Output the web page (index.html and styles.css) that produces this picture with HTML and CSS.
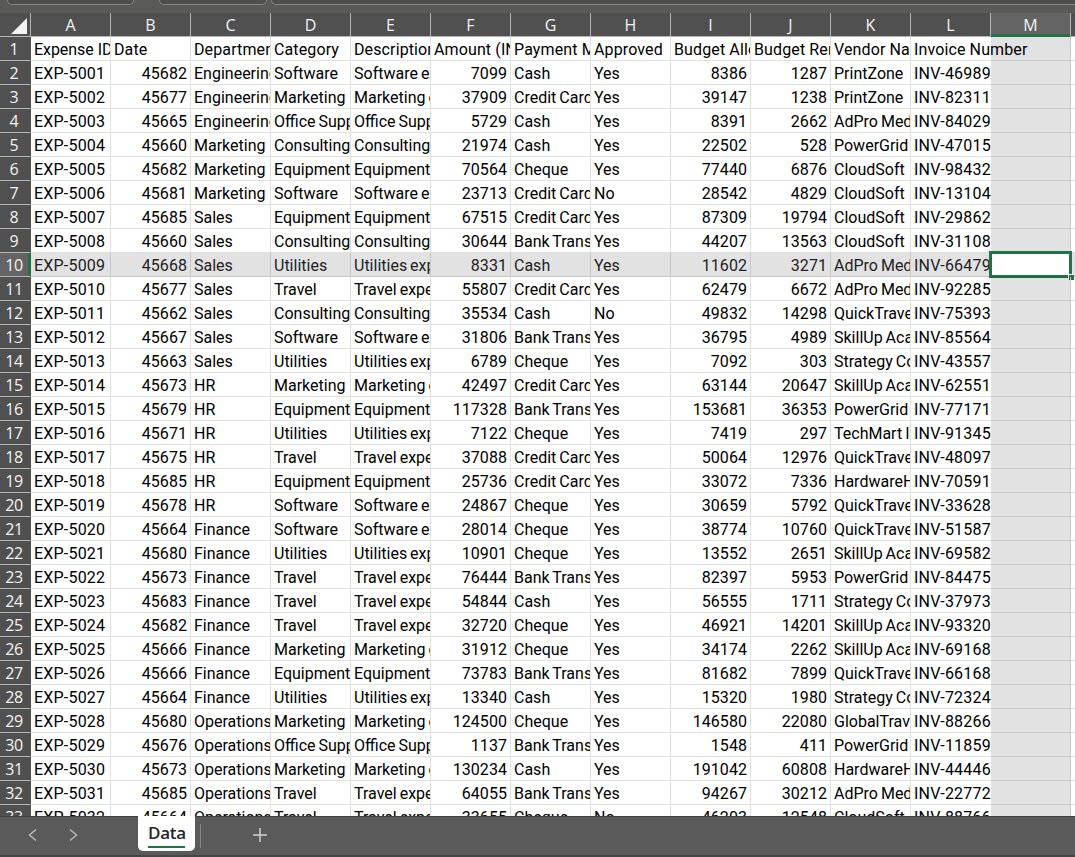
FILE: index.html
```
<!doctype html>
<html lang="en">
<head>
	<meta charset="UTF-8">
	<title>Expenses</title>
	<link rel="stylesheet" href="styles.css">
</head>
<body>
	<div class="formula-bar">
		<div class="box name-box"></div>
		<div class="box fx-box"></div>
		<div class="box formula-box"></div>
	</div>

	<div class="grid">
		<table id="sheet">
			<thead></thead>
			<tbody></tbody>
		</table>
	</div>

	<div class="tab-bar">
		<svg class="arrow" width="10" height="14" viewBox="0 0 10 14"><path d="M8 1.5L1.5 7L8 12.5"/></svg>
		<svg class="arrow" width="10" height="14" viewBox="0 0 10 14"><path d="M2 1.5L8.5 7L2 12.5"/></svg>
		<div class="tab"><span>Data</span></div>
		<div class="divider"></div>
		<svg class="plus" width="16" height="16" viewBox="0 0 16 16"><path d="M8 1V15M1 8H15"/></svg>
	</div>

	<script src="sheet.js"></script>
</body>
</html>
```

FILE: styles.css
```
body {
	margin: 0;
	width: 1075px;
	height: 857px;
	overflow: hidden;
	display: flex;
	flex-direction: column;
	background: #5a5a58;
	font-family: Roboto, "Liberation Sans", sans-serif;
	font-size: 16px;
}

/* bottom edge of the formula bar */
.formula-bar { display: flex; height: 13px; flex: none; padding-left: 7px; }
.box { box-sizing: border-box; height: 5px; background: #4e4e4e; border: 1px solid #858585; border-top: 0; border-radius: 0 0 5px 5px; }
.name-box { width: 127px; margin-right: 25px; }
.fx-box { width: 108px; margin-right: 4px; }
.formula-box { flex: 1; border-right: 0; border-bottom-right-radius: 0; }

.grid { height: 803px; flex: none; overflow: hidden; background: #fff; }
table { table-layout: fixed; width: 1151px; border-collapse: separate; border-spacing: 0; }
th, td { box-sizing: border-box; height: 24px; padding: 1px 0 0; white-space: nowrap; line-height: 22px; }

th { padding-top: 2px; line-height: 21px; background: #505050; color: #f3f3f3; font-family: "Open Sans", "Noto Sans", sans-serif; font-weight: normal; border-right: 1px solid #b5b5b5; border-bottom: 1px solid #b5b5b5; }
thead th { width: 80px; }
thead th.corner { width: 31px; }
tbody th { border-right-color: #505050; letter-spacing: -0.3px; padding-right: 2px; }
.corner svg { display: block; margin: 0 0 0 11px; fill: #f3f3f3; }
th.active { background: #646464; }
thead th.active { box-shadow: inset 0 -2px #217346; border-bottom-color: #217346; }
tbody th.active { box-shadow: inset -2px 0 #217346; border-right-color: #217346; }

td { overflow: hidden; padding: 2px 3px 0; line-height: 21px; color: #000; border-right: 1px solid #e0e0e0; border-bottom: 1px solid #e0e0e0; word-spacing: -1px; }
td.num { text-align: right; letter-spacing: 0.05px; }
td.id, td.last { letter-spacing: 0.2px; }
td.last { overflow: visible; border-right-color: transparent; }
tr:first-child td { letter-spacing: 0.12px; word-spacing: 0; }
tr:first-child td.id { letter-spacing: -0.05px; }
tr.current td { background: #e2e2e2; border-color: #c8c8c8; color: #222; }
tr.current td.last { border-right-color: #e2e2e2; }
td.selected { position: relative; background: rgba(0, 0, 0, 0.115); border-color: #c8c8c8; }

tr.current td.selected { overflow: visible; background: #fff; }
.cursor { position: absolute; left: -2px; top: -2px; box-sizing: border-box; width: 83px; height: 27px; border: 3px solid #217346; }
.handle { position: absolute; right: -5px; bottom: -5px; width: 5px; height: 5px; background: #217346; border: 1px solid #fff; border-width: 1px 0 0 1px; }

.tab-bar { display: flex; flex: 1; box-sizing: border-box; border-top: 1px solid #404040; border-bottom: 2px solid #444; background: #5a5a5a; }
.tab-bar svg { fill: none; stroke: #b8b8b8; stroke-width: 1.5; }
.arrow { margin: 11px 0 0 28px; }
.arrow + .arrow { margin-left: 30px; }
.tab { box-sizing: border-box; width: 57px; height: 35px; margin: -1px 0 0 60px; padding: 4px 10px 0; background: #fff; border-radius: 0 0 5px 5px; }
.tab span { display: block; height: 26px; border-bottom: 2px solid #107c41; color: #262626; font: 600 17px/25px "Open Sans", sans-serif; text-align: center; letter-spacing: -0.3px; }
.divider { width: 1px; height: 24px; margin: 7px 0 0 5px; background: #858585; }
.tab-bar .plus { margin: 10px 0 0 51px; stroke: #d0d0d0; }
```

FILE: sheet.js
```
var headers = ['Expense ID', 'Date', 'Department', 'Category', 'Description', 'Amount (INR)', 'Payment Mode', 'Approved', 'Budget Allocated', 'Budget Remaining', 'Vendor Name', 'Invoice Number'];

// date, department, category, amount, payment, approved, budget, vendor, invoice
var expenses = [
	[45682, 'Engineering', 'Software', 7099, 'Cash', 'Yes', 8386, 'PrintZone', 46989],
	[45677, 'Engineering', 'Marketing', 37909, 'Credit Card', 'Yes', 39147, 'PrintZone', 82311],
	[45665, 'Engineering', 'Office Supplies', 5729, 'Cash', 'Yes', 8391, 'AdPro Media', 84029],
	[45660, 'Marketing', 'Consulting', 21974, 'Cash', 'Yes', 22502, 'PowerGrid', 47015],
	[45682, 'Marketing', 'Equipment', 70564, 'Cheque', 'Yes', 77440, 'CloudSoft', 98432],
	[45681, 'Marketing', 'Software', 23713, 'Credit Card', 'No', 28542, 'CloudSoft', 13104],
	[45685, 'Sales', 'Equipment', 67515, 'Credit Card', 'Yes', 87309, 'CloudSoft', 29862],
	[45660, 'Sales', 'Consulting', 30644, 'Bank Transfer', 'Yes', 44207, 'CloudSoft', 31108],
	[45668, 'Sales', 'Utilities', 8331, 'Cash', 'Yes', 11602, 'AdPro Media', 66479],
	[45677, 'Sales', 'Travel', 55807, 'Credit Card', 'Yes', 62479, 'AdPro Media', 92285],
	[45662, 'Sales', 'Consulting', 35534, 'Cash', 'No', 49832, 'QuickTravel', 75393],
	[45667, 'Sales', 'Software', 31806, 'Bank Transfer', 'Yes', 36795, 'SkillUp Academy', 85564],
	[45663, 'Sales', 'Utilities', 6789, 'Cheque', 'Yes', 7092, 'Strategy Consulting', 43557],
	[45673, 'HR', 'Marketing', 42497, 'Credit Card', 'Yes', 63144, 'SkillUp Academy', 62551],
	[45679, 'HR', 'Equipment', 117328, 'Bank Transfer', 'Yes', 153681, 'PowerGrid', 77171],
	[45671, 'HR', 'Utilities', 7122, 'Cheque', 'Yes', 7419, 'TechMart India', 91345],
	[45675, 'HR', 'Travel', 37088, 'Credit Card', 'Yes', 50064, 'QuickTravel', 48097],
	[45685, 'HR', 'Equipment', 25736, 'Credit Card', 'Yes', 33072, 'HardwareHub', 70591],
	[45678, 'HR', 'Software', 24867, 'Cheque', 'Yes', 30659, 'QuickTravel', 33628],
	[45664, 'Finance', 'Software', 28014, 'Cheque', 'Yes', 38774, 'QuickTravel', 51587],
	[45680, 'Finance', 'Utilities', 10901, 'Cheque', 'Yes', 13552, 'SkillUp Academy', 69582],
	[45673, 'Finance', 'Travel', 76444, 'Bank Transfer', 'Yes', 82397, 'PowerGrid', 84475],
	[45683, 'Finance', 'Travel', 54844, 'Cash', 'Yes', 56555, 'Strategy Consulting', 37973],
	[45682, 'Finance', 'Travel', 32720, 'Cheque', 'Yes', 46921, 'SkillUp Academy', 93320],
	[45666, 'Finance', 'Marketing', 31912, 'Cheque', 'Yes', 34174, 'SkillUp Academy', 69168],
	[45666, 'Finance', 'Equipment', 73783, 'Bank Transfer', 'Yes', 81682, 'QuickTravel', 66168],
	[45664, 'Finance', 'Utilities', 13340, 'Cash', 'Yes', 15320, 'Strategy Consulting', 72324],
	[45680, 'Operations', 'Marketing', 124500, 'Cheque', 'Yes', 146580, 'GlobalTravel', 88266],
	[45676, 'Operations', 'Office Supplies', 1137, 'Bank Transfer', 'Yes', 1548, 'PowerGrid', 11859],
	[45673, 'Operations', 'Marketing', 130234, 'Cash', 'Yes', 191042, 'HardwareHub', 44446],
	[45685, 'Operations', 'Travel', 64055, 'Bank Transfer', 'Yes', 94267, 'AdPro Media', 22772],
	[45664, 'Operations', 'Travel', 33655, 'Cheque', 'No', 46203, 'CloudSoft', 88766]
];

var SELECTED_COL = 12, SELECTED_ROW = 10;

var head = '<tr><th class="corner"><svg width="16" height="16"><path d="M16 0V16H0Z"/></svg></th>';
'ABCDEFGHIJKLMN'.split('').forEach(function(letter, i) {
	head += '<th' + (i == SELECTED_COL ? ' class="active"' : '') + '>' + letter + '</th>';
});
document.querySelector('#sheet thead').innerHTML = head + '</tr>';

var rows = [headers].concat(expenses.map(function(e, i) {
	return ['EXP-' + (5001 + i), e[0], e[1], e[2], e[2] + ' expense', e[3], e[4], e[5], e[6], e[6] - e[3], e[7], 'INV-' + e[8]];
}));

var body = '';
rows.forEach(function(row, r) {
	var current = r + 1 == SELECTED_ROW;
	body += '<tr' + (current ? ' class="current"' : '') + '><th' + (current ? ' class="active"' : '') + '>' + (r + 1) + '</th>';
	for (var c = 0; c < 14; c++) {
		var value = c < row.length ? row[c] : '';
		var cls = typeof value == 'number' ? 'num' : c == 0 ? 'id' : c == 11 ? 'last' : c == SELECTED_COL ? 'selected' : '';
		if (current && c == SELECTED_COL) {
			value = '<div class="cursor"><div class="handle"></div></div>';
		}
		body += '<td class="' + cls + '">' + value + '</td>';
	}
	body += '</tr>';
});
document.querySelector('#sheet tbody').innerHTML = body;
```
